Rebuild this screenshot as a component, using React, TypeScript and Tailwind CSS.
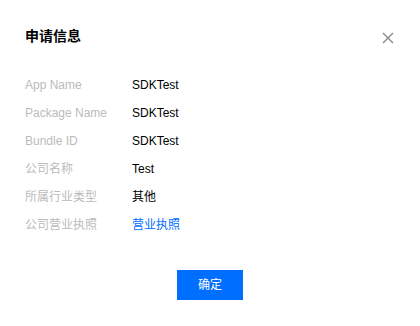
const rows: { label: string; value: string; link?: boolean }[] = [
  { label: "App Name", value: "SDKTest" },
  { label: "Package Name", value: "SDKTest" },
  { label: "Bundle ID", value: "SDKTest" },
  { label: "公司名称", value: "Test" },
  { label: "所属行业类型", value: "其他" },
  { label: "公司营业执照", value: "营业执照", link: true },
];

export default function App() {
  return (
    <div
      className="w-[420px] h-[326px] bg-white"
      style={{ fontFamily: '"Liberation Sans", Arial, "Noto Sans CJK SC", sans-serif' }}
    >
      {/* Header */}
      <div className="flex items-center justify-between pl-[25px] pr-[26px] pt-[28px]">
        <h3 className="text-[14px] leading-[16px] font-bold text-[#000]">申请信息</h3>
        <button className="w-[12px] h-[12px] text-[#888] mt-[4px]" aria-label="关闭">
          <svg viewBox="0 0 12 12" width="12" height="12" fill="none" stroke="currentColor" strokeWidth="1.4">
            <path d="M1 1L11 11M11 1L1 11" />
          </svg>
        </button>
      </div>

      {/* Info */}
      <div className="flex flex-col pl-[25px] mt-[27px]">
        {rows.map((row) => (
          <div key={row.label} className="flex h-[28px] items-center text-[12px]">
            <span className="w-[107px] text-[#bbb]">{row.label}</span>
            <span className={row.link ? "text-[#006eff]" : "text-[#000]"}>{row.value}</span>
          </div>
        ))}
      </div>

      {/* Footer */}
      <div className="flex justify-center mt-[31px]">
        <button className="w-[66px] h-[30px] bg-[#006eff] text-white text-[12px]">确定</button>
      </div>
    </div>
  );
}
